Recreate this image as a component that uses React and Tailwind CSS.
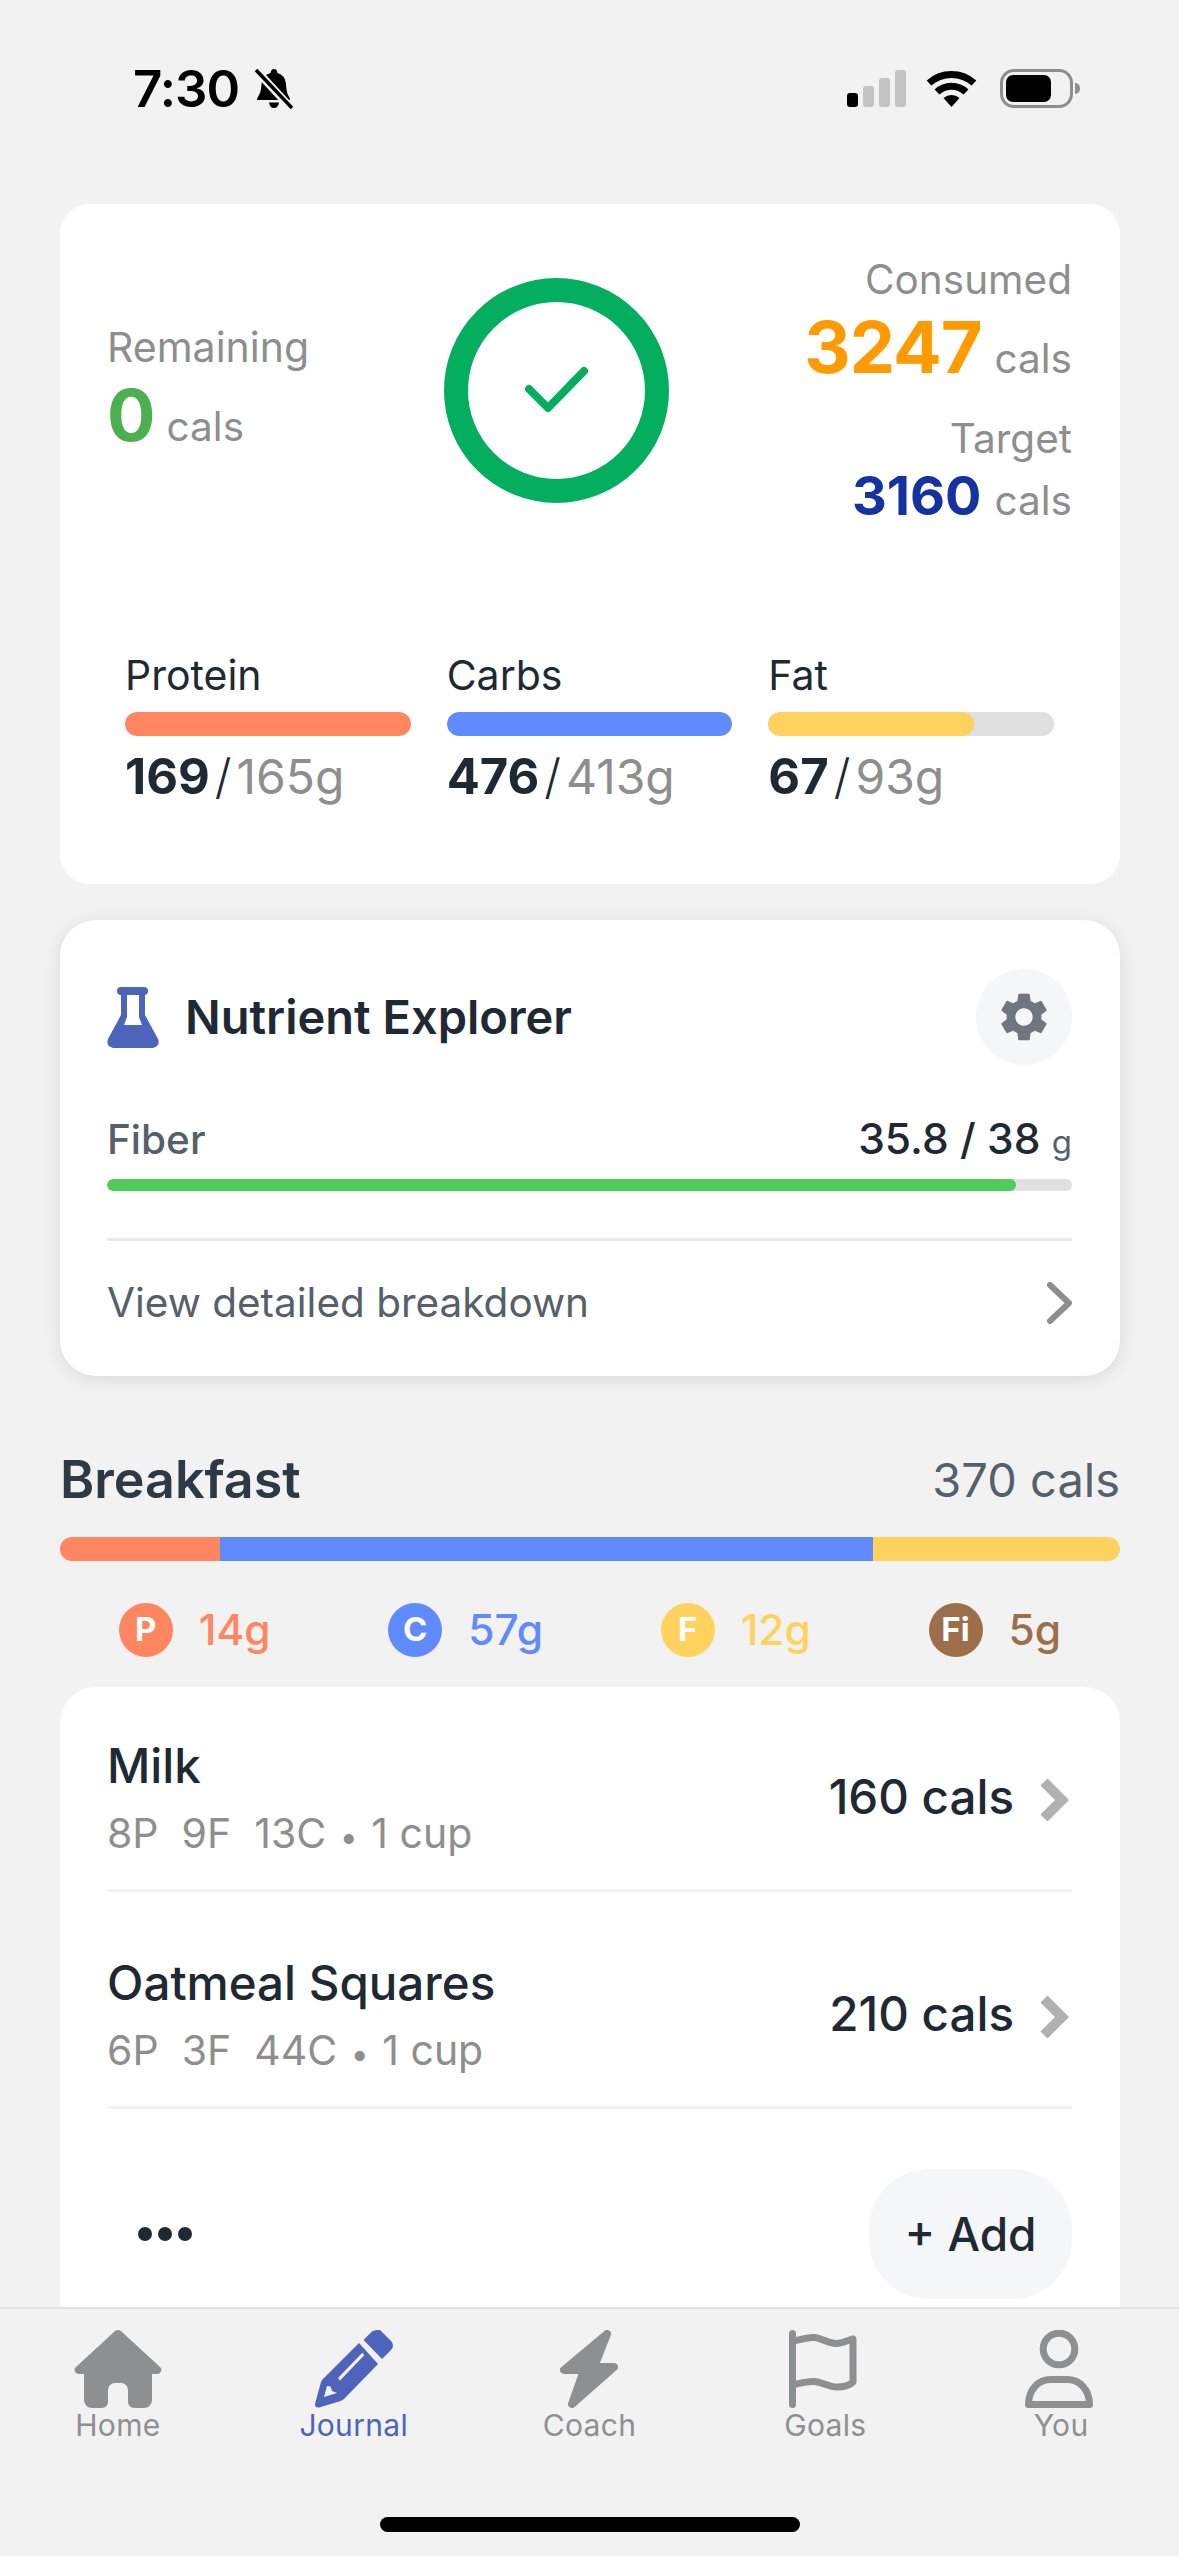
import { MdSettings } from "react-icons/md";

const foods = [
  { name: "Milk", macros: "8P  9F  13C", serving: "1 cup", cals: "160 cals" },
  { name: "Oatmeal Squares", macros: "6P  3F  44C", serving: "1 cup", cals: "210 cals" },
];

function HomeIcon() {
  return (
    <svg width="88" height="78" viewBox="0 0 88 78" fill="#8e8f90">
      <path d="M40.5 1.5a5 5 0 0 1 7 0L86 37a4 4 0 0 1-3 7H78V70a8 8 0 0 1-8 8H60a6 6 0 0 1-6-6V60a7 7 0 0 0-7-7H41a7 7 0 0 0-7 7V72a6 6 0 0 1-6 6H18a8 8 0 0 1-8-8V44H5a4 4 0 0 1-3-7Z" />
    </svg>
  );
}

function PencilIcon() {
  return (
    <svg width="78" height="78" viewBox="0 0 78 78" fill="#4d64ba">
      <path d="M48.5 10 57 1.5Q59 0 62 0H65L76 11Q78 13 78 16 78 18 76 20L67 29Z" />
      <path
        fillRule="evenodd"
        d="M44 13 63 34 29 69Q27 70.500 24 71.500L4 77.500Q0 78 0 74L6 52Q7 49 10 47ZM47 23 23 48 25 50.500 49 25.500Q49 23 47 23ZM12 56 9 67 22 63 17 61 15.500 56.500Z"
      />
    </svg>
  );
}

function BoltIcon() {
  return (
    <svg width="58" height="78" viewBox="0 0 58 78" fill="#8e8f90" stroke="#8e8f90" strokeWidth="8" strokeLinejoin="round">
      <path d="M47 4 4 40H24L12 74 54 37H34Z" />
    </svg>
  );
}

function FlagIcon() {
  return (
    <svg className="-ml-1" width="68" height="78" viewBox="0 0 68 78" fill="none" stroke="#8e8f90" strokeWidth="7" strokeLinecap="round" strokeLinejoin="round">
      <path d="M3.500 3.500V74.500" />
      <path d="M3.500 11C12 10 18 7 25 7.500 33 8 40 14 48 13.500 54 13 60 10 64 9V52C60 56 54 57 48 57 40 57 33 52 25 51.500 18 51 12 53 3.500 55" />
    </svg>
  );
}

function PersonIcon() {
  return (
    <svg className="-ml-1" width="68" height="78" viewBox="0 0 68 78" fill="none" stroke="#8e8f90" strokeWidth="7" strokeLinejoin="round">
      <circle cx="34" cy="19" r="15.800" />
      <path d="M3.500 74.500H64.500C64.500 60 55 49.500 42 49.500H26C13 49.500 3.500 60 3.500 74.500Z" />
    </svg>
  );
}

function FlaskIcon() {
  return (
    <svg width="52" height="61" viewBox="0 0 52 61" fill="#4d64ba">
      <rect x="10" y="0" width="31" height="8" rx="4" />
      <path
        fillRule="evenodd"
        d="M14 6V28L1 52C-1 57 2 61 8 61H44C50 61 53 57 51 52L38 28V6ZM20 8V30L17 38H35L32 30V8Z"
      />
    </svg>
  );
}

function BellOff() {
  return (
    <svg width="39" height="41" viewBox="0 0 39 41">
      <path d="M20 1Q23 1 23.500 5 31 7 32 16 32.500 24 34 27 36 30 36 32H3Q3 30 5 27 7 24 7.500 16 8.500 7 16.500 5 17 1 20 1ZM15 34.500H25Q24 40 20 40 16 40 15 34.500Z" />
      <path d="M1 1 38 41" stroke="#f2f2f2" strokeWidth="8" />
      <path d="M2 2 38 40" stroke="#000" strokeWidth="3.500" />
    </svg>
  );
}

function Wifi() {
  return (
    <svg width="51" height="37" viewBox="0 0 51 37" fill="none" stroke="#000" strokeWidth="7">
      <path d="M3 13A34 34 0 0 1 48 13" />
      <path d="M11 22A21 21 0 0 1 40 22" />
      <path d="M25.500 37 17.500 28A12 12 0 0 1 33.500 28Z" fill="#000" stroke="none" />
    </svg>
  );
}

function ChevronThin() {
  return (
    <svg width="25" height="42" viewBox="0 0 25 42" fill="none" stroke="#8e8e8e" strokeWidth="6" strokeLinecap="round" strokeLinejoin="round">
      <path d="M3 3 22 21 3 39" />
    </svg>
  );
}

function ChevronBold() {
  return (
    <svg className="mt-[5px]" width="29" height="42" viewBox="0 0 29 42" fill="none" stroke="#b0b0b0" strokeWidth="10" strokeLinejoin="miter">
      <path d="M4 3 22 21 4 39" />
    </svg>
  );
}

function MacroStat({ label, value, target, barClass, fill }) {
  return (
    <div>
      <div className="text-[41px] leading-[48px] text-[#1f2933]">{label}</div>
      <div className="mt-[13px] h-6 overflow-hidden rounded-full bg-[#e0e0e0]">
        <div className={`h-full rounded-full ${barClass}`} style={{ width: fill }} />
      </div>
      <div className="mt-[11px] flex items-baseline text-[48px] leading-[60px]">
        <span className="text-[49px] font-bold text-[#1f2933]">{value}</span>
        <span className="mx-[5px] font-light text-[#1f2933]">/</span>
        <span className="text-[#8e8e8e]">{target}</span>
      </div>
    </div>
  );
}

function Chip({ letter, amount, circleClass, textClass }) {
  return (
    <div className="flex items-center gap-[26px]">
      <div className={`flex h-[54px] w-[54px] items-center justify-center rounded-full text-[33px] font-bold text-white ${circleClass}`}>
        {letter}
      </div>
      <span className={`text-[42.5px] font-medium ${textClass}`}>{amount}</span>
    </div>
  );
}

function Tab({ icon, label, active }) {
  return (
    <div className="flex flex-col items-center">
      <div className="flex h-[78px] items-center">{icon}</div>
      <span className={`text-[30px] leading-[34px] tracking-[0.3px] ${active ? "text-[#4d64ba]" : "text-[#8e8f90]"}`}>{label}</span>
    </div>
  );
}

export default function App() {
  return (
    <div className="flex h-[2556px] w-[1179px] flex-col overflow-hidden bg-[#f2f2f2] font-['Inter',sans-serif]">
      <div className="min-h-0 flex-1 overflow-hidden">
        {/* status bar */}
        <div className="flex h-[204px] items-start justify-between pl-[133px] pr-[99px] pt-[60px]">
          <div className="flex h-14 items-center gap-[15px]">
            <span className="text-[51px] font-semibold leading-none tracking-[-1px] text-black">7:30</span>
            <BellOff />
          </div>
          <div className="flex h-14 items-center">
            <div className="flex h-[37px] items-end gap-[5px]">
              <div className="h-[14px] w-[11px] rounded-[3px] bg-black" />
              <div className="h-[21px] w-[11px] rounded-[3px] bg-[#c4c4c4]" />
              <div className="h-[29px] w-[11px] rounded-[3px] bg-[#c4c4c4]" />
              <div className="h-[37px] w-[11px] rounded-[3px] bg-[#c4c4c4]" />
            </div>
            <div className="ml-5 flex">
              <Wifi />
            </div>
            <div className="ml-[23px] flex items-center">
              <div className="h-[39px] w-[73px] rounded-[14px] border-[3px] border-[#8e8e8e] p-[3px]">
                <div className="h-full w-[45px] rounded-[7px] bg-black" />
              </div>
              <div className="ml-[2px] h-[11px] w-[5px] rounded-r-full bg-[#8e8e8e]" />
            </div>
          </div>
        </div>

        <div className="pl-[60px] pr-[59px]">
          {/* calorie summary */}
          <div className="h-[680px] rounded-[30px] bg-white pl-[47px] pr-12 pt-[46px]">
            <div className="flex h-[280px] items-center justify-between">
              <div>
                <div className="text-[41px] leading-[48px] text-[#8e8e8e]">Remaining</div>
                <div className="mt-1 flex items-baseline gap-[11px]">
                  <span className="text-[72px] font-bold leading-[80px] text-[#4caf50]">0</span>
                  <span className="text-[40.5px] text-[#8e8e8e]">cals</span>
                </div>
              </div>
              <div className="flex h-[225px] w-[225px] items-center justify-center rounded-full border-[24px] border-[#04ae5f]">
                <svg width="63" height="46" viewBox="0 0 63 46" fill="none" stroke="#04ae5f" strokeWidth="8" strokeLinecap="round" strokeLinejoin="round">
                  <path d="M4 22 23 41 59 4" />
                </svg>
              </div>
              <div className="mt-2 flex flex-col items-end">
                <div className="text-[40.5px] leading-[48px] text-[#8e8e8e]">Consumed</div>
                <div className="mt-[1px] flex items-baseline gap-[13px]">
                  <span className="text-[72px] font-bold leading-[84px] tracking-[-1px] text-[#ff9a00]">3247</span>
                  <span className="text-[40.5px] text-[#8e8e8e]">cals</span>
                </div>
                <div className="mt-[26px] text-[40.5px] leading-[48px] text-[#8e8e8e]">Target</div>
                <div className="-mt-[3px] flex items-baseline gap-[13px]">
                  <span className="text-[54px] font-bold leading-[72px] text-[#1533a0]">3160</span>
                  <span className="text-[40.5px] text-[#8e8e8e]">cals</span>
                </div>
              </div>
            </div>
            <div className="mt-[121px] grid grid-cols-3 gap-9 pl-[18px] pr-[18px]">
              <MacroStat label="Protein" value="169" target="165g" barClass="bg-[#ff8660]" fill="100%" />
              <MacroStat label="Carbs" value="476" target="413g" barClass="bg-[#5f8bff]" fill="100%" />
              <MacroStat label="Fat" value="67" target="93g" barClass="bg-[#ffd25e]" fill="72%" />
            </div>
          </div>

          {/* nutrient explorer */}
          <div className="mt-9 h-[456px] rounded-[36px] bg-white pl-[47px] pr-12 pt-[49px] shadow-[0_3px_18px_rgba(0,0,0,0.1)]">
            <div className="flex h-[96px] items-center justify-between">
              <div className="flex items-center gap-[26px]">
                <FlaskIcon />
                <span className="text-[47px] font-semibold text-[#1f2933]">Nutrient Explorer</span>
              </div>
              <div className="flex h-[96px] w-[96px] items-center justify-center rounded-full bg-[#f5f6f8]">
                <MdSettings size={58} color="#6f7680" />
              </div>
            </div>
            <div className="mt-[50px] flex items-baseline justify-between leading-[48px]">
              <span className="text-[40.5px] font-medium text-[#56606b]">Fiber</span>
              <span className="text-[42.5px] font-medium text-[#1f2933]">
                35.8 / 38 <span className="text-[33px] font-normal text-[#56606b]">g</span>
              </span>
            </div>
            <div className="mt-[13px] h-3 overflow-hidden rounded-full bg-[#e0e0e0]">
              <div className="h-full rounded-full bg-[#51cb5a]" style={{ width: "94.2%" }} />
            </div>
            <div className="mt-[47px] flex h-[127px] items-center justify-between border-t-[3px] border-[#e8e8e8]">
              <span className="text-[40.5px] text-[#56606b]">View detailed breakdown</span>
              <ChevronThin />
            </div>
          </div>

          {/* breakfast */}
          <div className="mt-[74px] flex items-center justify-between leading-[60px]">
            <span className="text-[52px] font-semibold text-[#2d3a45]">Breakfast</span>
            <span className="text-[47px] text-[#56606b]">370 cals</span>
          </div>
          <div className="mt-[27px] flex h-6 overflow-hidden rounded-full">
            <div className="w-[15.1%] bg-[#ff8660]" />
            <div className="w-[61.6%] bg-[#5f8bff]" />
            <div className="w-[23.3%] bg-[#ffd25e]" />
          </div>
          <div className="mt-[42px] flex h-[54px] items-center justify-around">
            <Chip letter="P" amount="14g" circleClass="bg-[#ff8660]" textClass="text-[#ff8660]" />
            <Chip letter="C" amount="57g" circleClass="bg-[#5f8bff]" textClass="text-[#5f8bff]" />
            <Chip letter="F" amount="12g" circleClass="bg-[#ffd25e]" textClass="text-[#ffd25e]" />
            <Chip letter="Fi" amount="5g" circleClass="bg-[#9c6f4a]" textClass="text-[#9c6f4a]" />
          </div>
          <div className="mt-[30px] rounded-t-[36px] bg-white pl-[47px] pr-12 pt-[46px]">
            {foods.map((f, i) => (
              <div
                key={f.name}
                className={`flex items-center justify-between border-b-[3px] border-[#f2f2f2] pb-8 ${i > 0 ? "pt-[58px]" : ""}`}
              >
                <div>
                  <div className="pt-[3px] text-[47.5px] font-medium leading-[60px] text-[#1f2933]">{f.name}</div>
                  <div className="mt-[13px] h-12 whitespace-pre text-[41px] leading-[48px] text-[#8e8e8e]">
                    {f.macros} <span className="mx-[2px] text-[32px] leading-none">•</span> {f.serving}
                  </div>
                </div>
                <div className="mt-1 flex items-center gap-[26px] pr-[3px]">
                  <span className="text-[47.5px] font-medium text-[#1f2933]">{f.cals}</span>
                  <ChevronBold />
                </div>
              </div>
            ))}
            <div className="mt-[60px] flex items-center justify-between pb-8">
              <div className="ml-[31px] flex gap-[6px]">
                <div className="h-[14px] w-[14px] rounded-full bg-[#1f2933]" />
                <div className="h-[14px] w-[14px] rounded-full bg-[#1f2933]" />
                <div className="h-[14px] w-[14px] rounded-full bg-[#1f2933]" />
              </div>
              <div className="flex h-[130px] w-[203px] items-center justify-center rounded-[60px] bg-[#f5f6f8] text-[46px] font-medium text-[#1f2933]">
                + Add
              </div>
            </div>
          </div>
        </div>
      </div>

      {/* tab bar */}
      <div className="relative h-[249px] shrink-0 border-t-2 border-[#e2e2e2] bg-[#f2f2f2] pt-[21px]">
        <div className="grid grid-cols-5">
          <Tab icon={<HomeIcon />} label="Home" />
          <Tab icon={<PencilIcon />} label="Journal" active />
          <Tab icon={<BoltIcon />} label="Coach" />
          <Tab icon={<FlagIcon />} label="Goals" />
          <Tab icon={<PersonIcon />} label="You" />
        </div>
        <div className="absolute bottom-[24px] left-[380px] h-[15px] w-[420px] rounded-full bg-black" />
      </div>
    </div>
  );
}
